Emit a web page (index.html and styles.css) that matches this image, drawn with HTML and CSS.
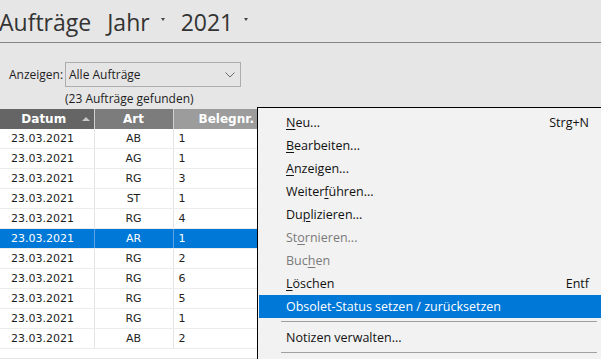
FILE: index.html
```html
<!DOCTYPE html>
<html lang="de">
<head>
    <meta charset="UTF-8">
    <title>Aufträge</title>
    <link rel="stylesheet" href="styles.css">
</head>
<body>
    <div class="window">
        <header class="titlebar">
            <h1 class="title">Aufträge</h1>
            <span class="picker">Jahr<i class="caret"></i></span>
            <span class="picker">2021<i class="caret"></i></span>
        </header>

        <section class="filter">
            <div class="filter-row">
                <span class="filter-label">Anzeigen:</span>
                <div class="select">
                    <span>Alle Aufträge</span>
                    <svg class="chevron" width="10" height="6" viewBox="0 0 10 6"><path d="M0.5 0.5 L5 5 L9.5 0.5" fill="none" stroke="#6b6b6b" stroke-width="1"/></svg>
                </div>
            </div>
            <div class="found">(23 Aufträge gefunden)</div>
        </section>

        <div class="list">
            <table class="grid">
                <colgroup>
                    <col class="col-date">
                    <col class="col-type">
                    <col>
                </colgroup>
                <thead>
                    <tr>
                        <th class="th-date">Datum<i class="sort-up"></i></th>
                        <th class="th-type">Art</th>
                        <th class="th-no">Belegnr.</th>
                    </tr>
                </thead>
                <tbody>
                    <tr><td>23.03.2021</td><td class="c">AB</td><td>1</td></tr>
                    <tr><td>23.03.2021</td><td class="c">AG</td><td>1</td></tr>
                    <tr><td>23.03.2021</td><td class="c">RG</td><td>3</td></tr>
                    <tr><td>23.03.2021</td><td class="c">ST</td><td>1</td></tr>
                    <tr><td>23.03.2021</td><td class="c">RG</td><td>4</td></tr>
                    <tr class="selected"><td>23.03.2021</td><td class="c">AR</td><td>1</td></tr>
                    <tr><td>23.03.2021</td><td class="c">RG</td><td>2</td></tr>
                    <tr><td>23.03.2021</td><td class="c">RG</td><td>6</td></tr>
                    <tr><td>23.03.2021</td><td class="c">RG</td><td>5</td></tr>
                    <tr><td>23.03.2021</td><td class="c">RG</td><td>1</td></tr>
                    <tr><td>23.03.2021</td><td class="c">AB</td><td>2</td></tr>
                </tbody>
            </table>
        </div>

        <!-- context menu over the list -->
        <ul class="context-menu">
            <li class="item"><span><u>N</u>eu...</span><span class="key">Strg+N</span></li>
            <li class="item"><span><u>B</u>earbeiten...</span></li>
            <li class="item"><span><u>A</u>nzeigen...</span></li>
            <li class="item"><span>Weiter<u>f</u>ühren...</span></li>
            <li class="item"><span>Du<u>p</u>lizieren...</span></li>
            <li class="item disabled"><span>St<u>o</u>rnieren...</span></li>
            <li class="item disabled"><span>Buc<u>h</u>en</span></li>
            <li class="item"><span><u>L</u>öschen</span><span class="key">Entf</span></li>
            <li class="item active"><span>Obsolet-Status setzen / zurücksetzen</span></li>
            <li class="separator"></li>
            <li class="item"><span>Notizen verwalten...</span></li>
            <li class="separator"></li>
        </ul>
    </div>
</body>
</html>
```

FILE: styles.css
```css
:root {
    --panel: #e6e6e6;
    --text: #1e1e1e;
    --ui-font: 'Open Sans', 'Noto Sans', sans-serif;
    --grid-font: 'DejaVu Sans', Verdana, sans-serif;
    --select: #0078d7;
}

html, body {
    margin: 0;
    padding: 0;
}

body {
    width: 601px;
    height: 359px;
    overflow: hidden;
    background: var(--panel);
    color: var(--text);
    font-family: var(--ui-font);
}

.window {
    position: relative;
    height: 359px;
}

/* title bar */
.titlebar {
    display: flex;
    align-items: center;
    gap: 16px;
    height: 42px;
    border-bottom: 1px solid #858585;
    color: #333;
}

.title {
    margin: 1px 0 0 -1px;
    font-size: 23px;
    font-weight: 400;
}

.picker {
    display: flex;
    align-items: center;
    margin-top: 1px;
    font-size: 23px;
}

.caret {
    width: 0;
    height: 0;
    margin-left: 11px;
    margin-top: -4px;
    border-left: 2px solid transparent;
    border-right: 2px solid transparent;
    border-top: 3px solid #444;
}

/* filter */
.filter {
    padding: 19px 0 0 9px;
    height: 47px;
    font-size: 12px;
}

.filter-row {
    display: flex;
    align-items: center;
}

.filter-label {
    width: 56px;
}

.select {
    display: flex;
    align-items: center;
    justify-content: space-between;
    box-sizing: border-box;
    width: 176px;
    height: 25px;
    padding: 0 5px 0 3px;
    border: 1px solid #adadad;
    background: #e5e5e5;
}

.found {
    margin: 3px 0 0 56px;
}

/* list */
.list {
    background: #fff;
    height: 249px;
}

.grid {
    width: 100%;
    border-collapse: collapse;
    table-layout: fixed;
    font-family: var(--grid-font);
    font-size: 11px;
}

.col-date {
    width: 94px;
}

.col-type {
    width: 79px;
}

.grid th {
    height: 20px;
    padding: 0;
    color: #fff;
    font-size: 12px;
    font-weight: bold;
    border-right: 1px solid #d0d0d0;
}

.th-date {
    position: relative;
    background: #656565;
    text-align: center;
    padding-right: 6px !important;
}

.sort-up {
    position: absolute;
    right: 4px;
    top: 8px;
    border-left: 4px solid transparent;
    border-right: 4px solid transparent;
    border-bottom: 4px solid #c8c8c8;
}

.th-type {
    background: #7c7c7c;
}

.th-no {
    background: #9c9c9c;
    text-align: left;
    padding-left: 25px !important;
}

.grid td {
    height: 19px;
    padding: 0 0 0 11px;
    border-bottom: 1px solid #ececec;
    border-right: 1px solid #e4e4e4;
    white-space: nowrap;
}

.grid td:nth-child(3) {
    padding-left: 5px;
}

.grid td.c {
    text-align: center;
    padding-left: 0;
}

.grid tr.selected td {
    background: var(--select);
    color: #fff;
    border-right-color: #5aa3e6;
}

/* context menu */
.context-menu {
    position: absolute;
    left: 257px;
    top: 107px;
    width: 342px;
    height: 260px;
    margin: 0;
    padding: 3px 1px 0 1px;
    list-style: none;
    background: #f2f2f2;
    border-left: 1px solid #000;
    border-top: 1px solid #000;
    font-size: 12.5px;
    color: #111;
}

.item {
    display: flex;
    justify-content: space-between;
    align-items: center;
    height: 23px;
    padding: 0 12px 0 27px;
}

.item u {
    text-underline-offset: 2px;
}

.item.disabled {
    color: #7a7a7a;
}

.item.active {
    background: var(--select);
    color: #fff;
}

.separator {
    height: 1px;
    margin: 3px 4px 4px 22px;
    background: #a0a0a0;
}
```
